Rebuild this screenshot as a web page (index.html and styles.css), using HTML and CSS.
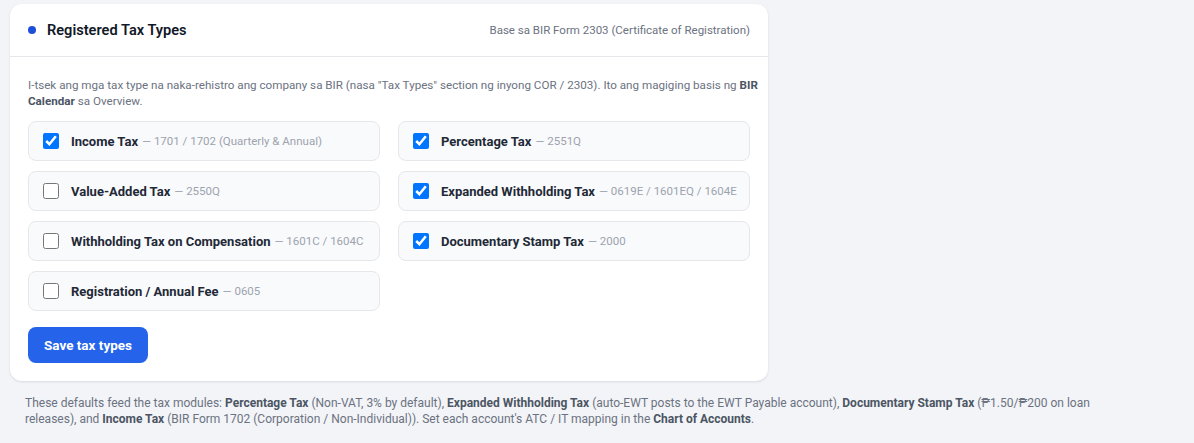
FILE: index.html
```html
<!DOCTYPE html>
<html lang="en">
<head>
<meta charset="utf-8">
<title>Registered Tax Types</title>
<link rel="stylesheet" href="styles.css">
</head>
<body>
  <section class="card">
    <header class="card-head">
      <div class="card-title"><span class="dot"></span><h2>Registered Tax Types</h2></div>
      <div class="card-note">Base sa BIR Form 2303 (Certificate of Registration)</div>
    </header>
    <div class="card-body">
      <p class="intro">I-tsek ang mga tax type na naka-rehistro ang company sa BIR (nasa "Tax Types" section ng inyong COR / 2303). Ito ang magiging basis ng <b>BIR Calendar</b> sa Overview.</p>
      <div class="tax-grid">
        <label class="tax-item"><input type="checkbox" checked><span class="name">Income Tax</span><span class="code">— 1701 / 1702 (Quarterly &amp; Annual)</span></label>
        <label class="tax-item"><input type="checkbox" checked><span class="name">Percentage Tax</span><span class="code">— 2551Q</span></label>
        <label class="tax-item"><input type="checkbox"><span class="name">Value-Added Tax</span><span class="code">— 2550Q</span></label>
        <label class="tax-item"><input type="checkbox" checked><span class="name">Expanded Withholding Tax</span><span class="code">— 0619E / 1601EQ / 1604E</span></label>
        <label class="tax-item"><input type="checkbox"><span class="name">Withholding Tax on Compensation</span><span class="code">— 1601C / 1604C</span></label>
        <label class="tax-item"><input type="checkbox" checked><span class="name">Documentary Stamp Tax</span><span class="code">— 2000</span></label>
        <label class="tax-item"><input type="checkbox"><span class="name">Registration / Annual Fee</span><span class="code">— 0605</span></label>
      </div>
      <button class="btn-save" type="button">Save tax types</button>
    </div>
  </section>
  <p class="footnote">These defaults feed the tax modules: <b>Percentage Tax</b> (Non-VAT, 3% by default), <b>Expanded Withholding Tax</b> (auto-EWT posts to the EWT Payable account), <b>Documentary Stamp Tax</b> (₱1.50/₱200 on loan releases), and <b>Income Tax</b> (BIR Form 1702 (Corporation / Non-Individual)). Set each account's ATC / IT mapping in the <b>Chart of Accounts</b>.</p>
</body>
</html>
```
FILE: styles.css
```css
* { box-sizing: border-box; }

body {
  margin: 0;
  padding: 4px 10px 0;
  background: #f3f4f8;
  font-family: Roboto, "Liberation Sans", sans-serif;
  color: #111827;
}

.card {
  width: 758px;
  background: #ffffff;
  border-radius: 12px;
  box-shadow: 0 1px 3px rgba(15, 23, 42, 0.08), 0 1px 2px rgba(15, 23, 42, 0.04);
}

.card-head {
  height: 53px;
  display: flex;
  align-items: center;
  justify-content: space-between;
  padding: 0 18px;
  border-bottom: 1px solid #e5e7eb;
}

.card-title {
  display: flex;
  align-items: center;
  gap: 11px;
}

.dot {
  width: 8px;
  height: 8px;
  border-radius: 50%;
  background: #1d4ed8;
}

.card-title h2 {
  margin: 0;
  font-size: 14.6px;
  font-weight: 600;
  color: #111827;
}

.card-note {
  font-size: 11.5px;
  color: #6b7280;
}

.card-body {
  padding: 20px 18px 18px;
}

.intro {
  margin: 0 -8px 12px 0;
  font-size: 11.65px;
  line-height: 16px;
  color: #6b7280;
}

.intro b { color: #4b5563; font-weight: 700; }

.tax-grid {
  display: grid;
  grid-template-columns: 352px 352px;
  column-gap: 18px;
  row-gap: 10px;
}

.tax-item {
  height: 40px;
  display: flex;
  align-items: center;
  padding: 0 14px;
  background: #f9fafb;
  border: 1px solid #e5e7eb;
  border-radius: 8px;
  font-size: 13px;
  white-space: nowrap;
  cursor: pointer;
}

.tax-item input {
  flex-shrink: 0;
  width: 16px;
  height: 16px;
  margin: 0 12px 0 0;
}

.tax-item .name {
  font-weight: 700;
  color: #1f2937;
}

.tax-item .code {
  margin-left: 4px;
  font-size: 11.5px;
  color: #9ca3af;
}

.btn-save {
  margin-top: 16px;
  width: 120px;
  height: 36px;
  border: 0;
  border-radius: 8px;
  background: #2563eb;
  color: #ffffff;
  font-family: inherit;
  font-size: 13.5px;
  font-weight: 700;
  cursor: pointer;
}

.footnote {
  margin: 14px 0 0;
  padding: 0 15px;
  max-width: 1110px;
  font-size: 12px;
  line-height: 16px;
  color: #6b7280;
}

.footnote b { color: #4b5563; font-weight: 700; }
```
